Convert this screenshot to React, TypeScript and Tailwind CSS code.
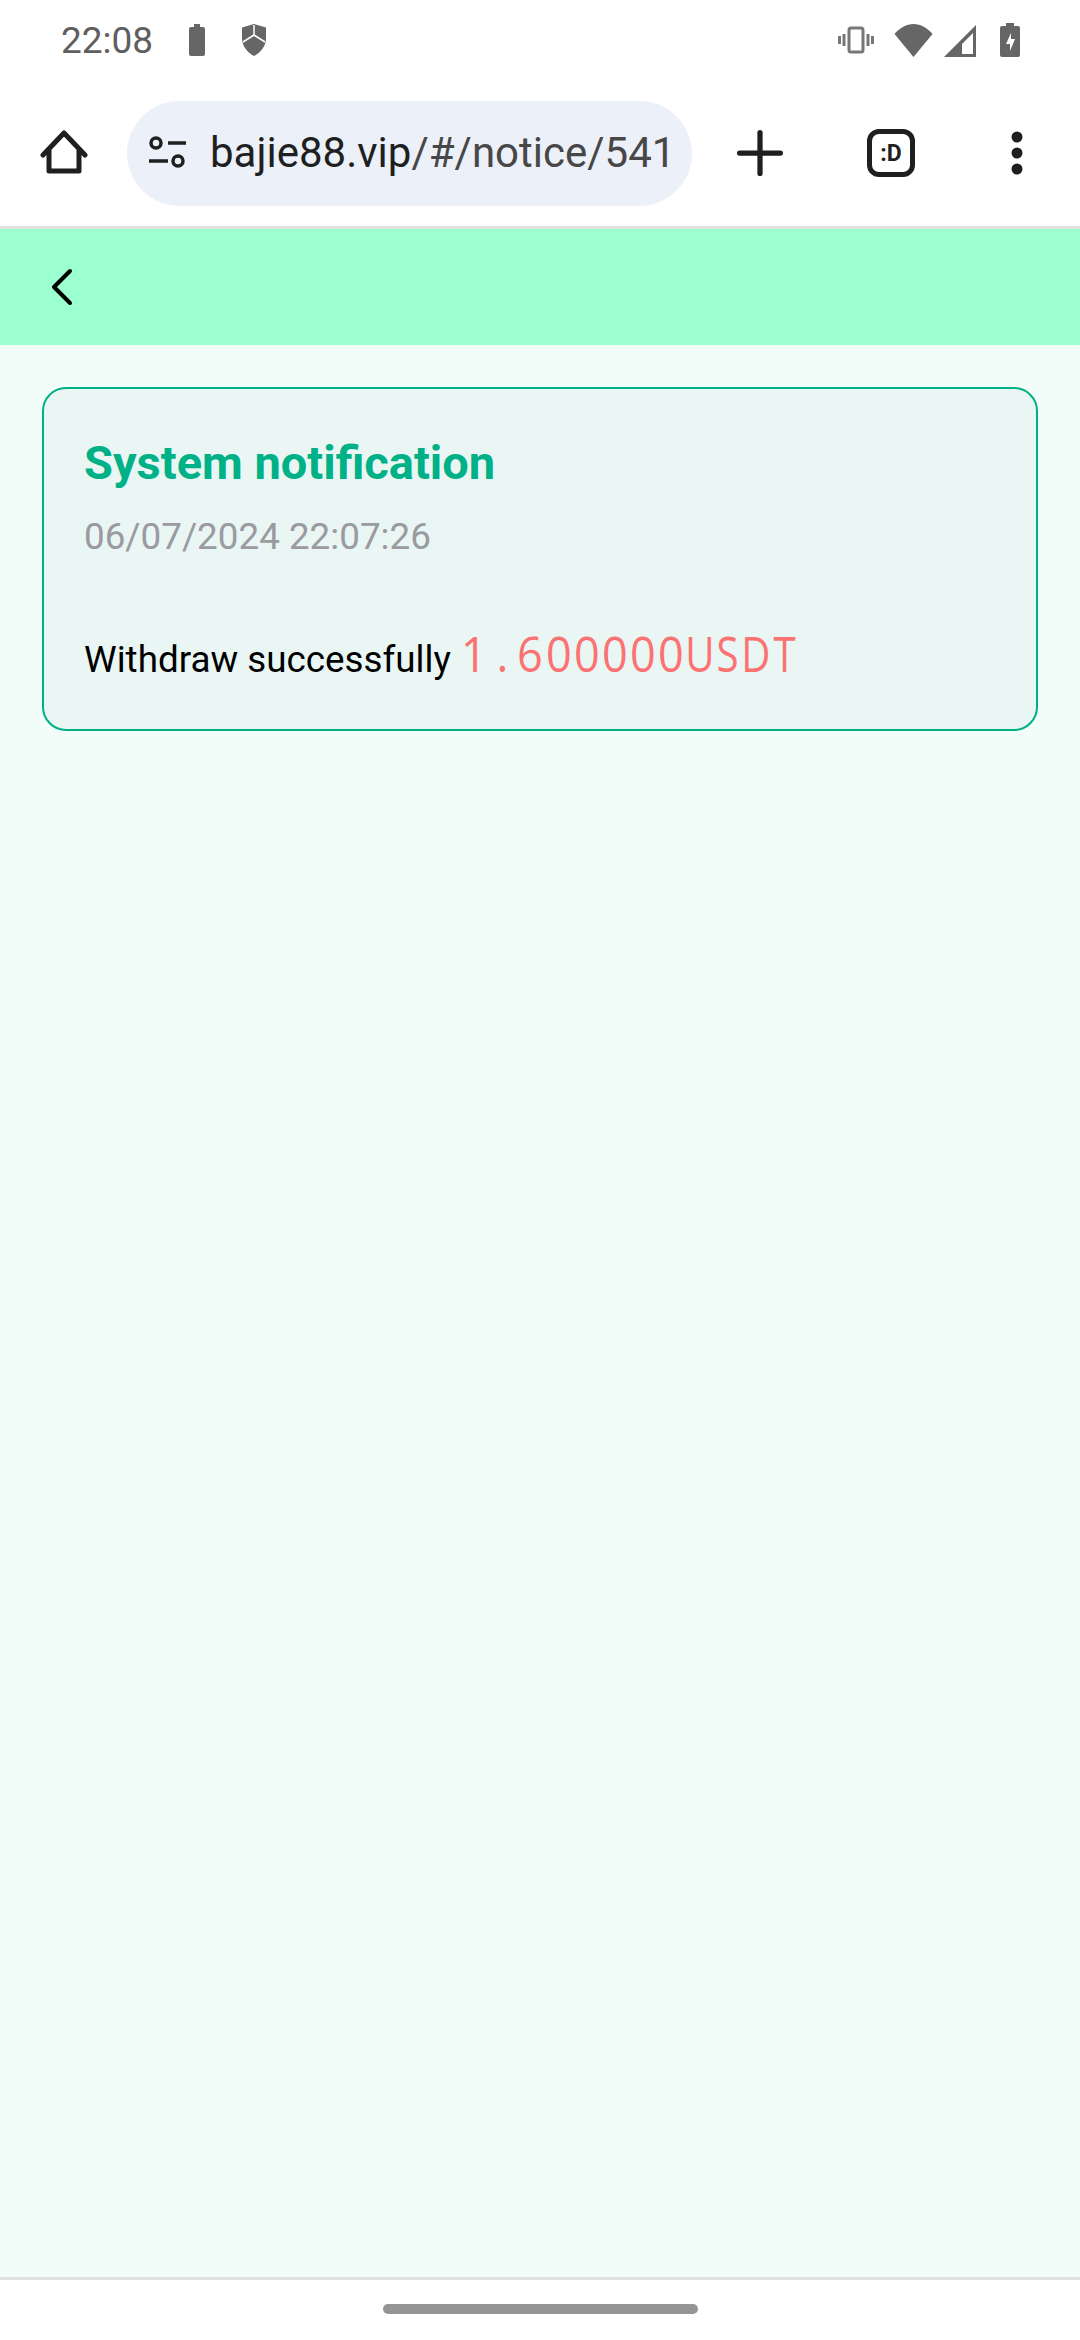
import { Plus } from "lucide-react";

const roboto = { fontFamily: "Roboto, sans-serif" };

function StatusBar() {
  return (
    <div className="flex h-[80px] items-center justify-between pl-[61px] pr-[60px] bg-white">
      <div className="flex items-center">
        <span className="text-[37px] leading-none text-[#5f5f5f]">22:08</span>
        <svg className="ml-[35px]" width="18" height="34" viewBox="0 0 18 34" fill="#666">
          <path d="M6 1h6v3h3a2 2 0 0 1 2 2v25a2 2 0 0 1-2 2H3a2 2 0 0 1-2-2V6a2 2 0 0 1 2-2h3z" />
        </svg>
        <svg className="ml-[35px]" width="26" height="32" viewBox="0 0 26 32" fill="#666">
          <path d="M13 0l12 3.5V14c0 8-5 14-12 18C6 28 1 22 1 14V3.5z" />
          <path d="M13 1v10M13 11L2 18M13 11l11 7" stroke="#fff" strokeWidth="1.5" fill="none" />
        </svg>
      </div>
      <div className="flex items-center">
        <svg width="36" height="28" viewBox="0 0 36 28" fill="none" stroke="#777">
          <rect x="11" y="2" width="14" height="24" rx="2" strokeWidth="3" />
          <path d="M6 8v12M1.500 10v8M30 8v12M34.500 10v8" strokeWidth="3" />
        </svg>
        <svg className="ml-[20px]" width="39" height="33" viewBox="0 0 38 33" fill="#666">
          <path d="M19 33L0 10C5 4 12 0 19 0s14 4 19 10z" />
        </svg>
        <svg className="ml-[11px]" width="32" height="33" viewBox="0 0 32 33" fill="#666">
          <path fillRule="evenodd" d="M32 1v32H0zM29 9L18 20v10h11z" />
        </svg>
        <svg className="ml-[24px]" width="20" height="34" viewBox="0 0 20 34" fill="#666">
          <path d="M6 0h8v3h4a2 2 0 0 1 2 2v27a2 2 0 0 1-2 2H2a2 2 0 0 1-2-2V5a2 2 0 0 1 2-2h4z" />
          <path d="M11 10l-5 11h4v7l5-12h-4z" fill="#fff" />
        </svg>
      </div>
    </div>
  );
}

function BrowserBar() {
  return (
    <div className="flex h-[149px] items-center bg-white border-b-[3px] border-[#e2e2e2]">
      <div className="flex w-[127px] justify-center">
        <svg width="48" height="48" viewBox="0 0 48 48" fill="none" stroke="#1f1f1f" strokeWidth="5" strokeLinejoin="round" strokeLinecap="round">
          <path d="M3 26L24 4l21 22M9 21v21h30V21" />
        </svg>
      </div>
      <div className="flex h-[105px] w-[565px] items-center overflow-hidden rounded-full bg-[#ebf0f9] pl-[21px]">
        <svg className="shrink-0" width="40" height="36" viewBox="0 0 40 36" fill="none" stroke="#1f1f1f" strokeWidth="3.500">
          <circle cx="8" cy="8" r="5" />
          <circle cx="30" cy="26" r="5" />
          <path d="M20 8h18M1 26h19" />
        </svg>
        <span className="ml-[22px] whitespace-nowrap text-[42px] leading-none text-[#1f1f1f]">
          bajie88.vip<span className="text-[#474747]">/#/notice/541</span>
        </span>
      </div>
      <div className="flex w-[136px] justify-center">
        <Plus size={70} strokeWidth={1.800} color="#1f1f1f" />
      </div>
      <div className="flex w-[126px] justify-center">
        <div className="flex h-[48px] w-[48px] items-center justify-center rounded-[12px] border-[5px] border-[#1f1f1f] text-[23px] font-bold leading-none text-[#1f1f1f]">
          :D
        </div>
      </div>
      <div className="flex flex-1 justify-center">
        <svg width="12" height="46" viewBox="0 0 12 46" fill="#1f1f1f">
          <circle cx="6" cy="7" r="5.500" />
          <circle cx="6" cy="23" r="5.500" />
          <circle cx="6" cy="39" r="5.500" />
        </svg>
      </div>
    </div>
  );
}

// fixed-width cells, the amount is set in a mono style with plain zeros
function Amount({ value }: { value: string }) {
  return (
    <span className="ml-[9px] flex text-[49px] leading-[60px] text-[#fb7272]" style={{ fontFamily: "'Open Sans', sans-serif" }}>
      {value.split("").map((ch, i) => (
        <span key={i} className="flex w-[28.200px] justify-center">
          <span className={/[A-Z]/.test(ch) ? "inline-block scale-x-[0.82]" : "inline-block scale-x-[0.92]"}>{ch}</span>
        </span>
      ))}
    </span>
  );
}

export default function App() {
  return (
    <div className="flex h-[2340px] w-[1080px] flex-col overflow-hidden bg-white" style={roboto}>
      <StatusBar />
      <BrowserBar />

      {/* Page header */}
      <div className="flex h-[116px] items-center bg-[#9cffd0] pl-[50px]">
        <svg width="24" height="38" viewBox="0 0 24 38" fill="none" stroke="#000" strokeWidth="4" strokeLinecap="round" strokeLinejoin="round">
          <path d="M20 3L4 19l16 16" />
        </svg>
      </div>

      <div className="flex-1 bg-[#f2fcf8] px-[42px] pt-[42px]">
        <div className="h-[344px] rounded-[24px] border-2 border-[#00b187] bg-[#e9f6f3] px-[40px] pt-[48px]">
          <h1 className="text-[47px] font-bold leading-[52px] text-[#00b187]">System notification</h1>
          <p className="mt-[26px] text-[36.800px] leading-[44px] text-[#9a9aa0]">06/07/2024 22:07:26</p>
          <p className="mt-[64px] flex items-baseline whitespace-pre text-[36.800px] leading-[60px] text-black">
            Withdraw successfully
            <Amount value="1.600000USDT" />
          </p>
        </div>
      </div>

      {/* Gesture nav */}
      <div className="flex h-[63px] justify-center border-t-[3px] border-[#e2e2e2] bg-white pt-[24px]">
        <div className="h-[10px] w-[315px] rounded-full bg-[#959595]" />
      </div>
    </div>
  );
}
